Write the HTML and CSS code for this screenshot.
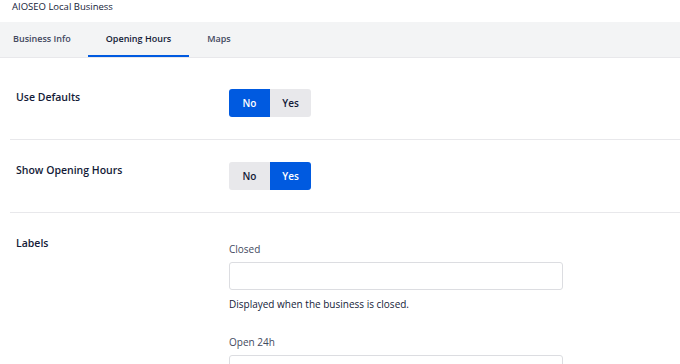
FILE: index.html
```html
<!DOCTYPE html>
<html lang="en">
<head>
<meta charset="UTF-8">
<title>AIOSEO Local Business</title>
<link rel="stylesheet" href="styles.css">
</head>
<body>

<!-- HEADER -->
<div class="box-title">AIOSEO Local Business</div>

<!-- TABS -->
<div class="tabs">
  <a class="tab first">Business Info</a>
  <a class="tab active">Opening Hours</a>
  <a class="tab">Maps</a>
</div>

<!-- SETTINGS -->
<div class="settings">

  <div class="row">
    <div class="row-name">Use Defaults</div>
    <div class="row-content">
      <div class="radio-group">
        <span class="radio on">No</span>
        <span class="radio">Yes</span>
      </div>
    </div>
  </div>

  <div class="row">
    <div class="row-name">Show Opening Hours</div>
    <div class="row-content">
      <div class="radio-group">
        <span class="radio">No</span>
        <span class="radio on">Yes</span>
      </div>
    </div>
  </div>

  <div class="row last">
    <div class="row-name">Labels</div>
    <div class="row-content labels">
      <div class="field">
        <label>Closed</label>
        <input type="text">
        <p class="desc">Displayed when the business is closed.</p>
      </div>
      <div class="field">
        <label>Open 24h</label>
        <input type="text">
      </div>
    </div>
  </div>

</div>

</body>
</html>
```

FILE: styles.css
```css
/* RESET */
*{
  margin:0;
  padding:0;
  box-sizing:border-box;
  font-family:"Open Sans", "Noto Sans", sans-serif;
}

body{
  background:#fff;
  color:#141b38;
  font-size:11px;
}

/* HEADER */
.box-title{
  height:22px;
  padding:0 12px;
  line-height:14px;
  font-size:9.5px;
  color:#141b38;
}

/* TABS */
.tabs{
  display:flex;
  height:36px;
  background:#f3f4f5;
  border-bottom:1px solid #e8e8eb;
}

.tab{
  display:block;
  padding:0 18px;
  line-height:34px;
  font-size:9px;
  font-weight:600;
  color:#434960;
  border-bottom:2px solid transparent;
}

.tab.first{
  padding:0 17px 0 13px;
}

.tab.active{
  color:#141b38;
  border-bottom-color:#005ae0;
}

/* SETTINGS */
.settings{
  padding-left:10px;
  padding-top:9px;
}

.row{
  display:flex;
  padding:22px 0;
  border-bottom:1px solid #e8e8eb;
}

.row.last{
  border-bottom:none;
}

.row-name{
  width:219px;
  padding-left:6px;
  padding-top:1px;
  font-size:10.5px;
  font-weight:600;
  color:#141b38;
}

/* RADIO TOGGLE */
.radio-group{
  display:flex;
  border-radius:3px;
  overflow:hidden;
}

.radio{
  width:41px;
  height:28px;
  line-height:28px;
  text-align:center;
  background:#e8e8eb;
  color:#141b38;
  font-size:10px;
  font-weight:600;
}

.radio.on{
  background:#005ae0;
  color:#fff;
}

/* LABEL FIELDS */
.labels{
  padding-top:7px;
}

.field{
  margin-bottom:24px;
}

.field label{
  display:block;
  line-height:14px;
  font-size:10px;
  color:#434960;
  margin-bottom:6px;
}

.field input{
  display:block;
  width:334px;
  height:28px;
  border:1px solid #dcdde1;
  border-radius:3px;
  background:#fff;
}

.desc{
  margin-top:7px;
  line-height:14px;
  font-size:10px;
  color:#141b38;
}
```
